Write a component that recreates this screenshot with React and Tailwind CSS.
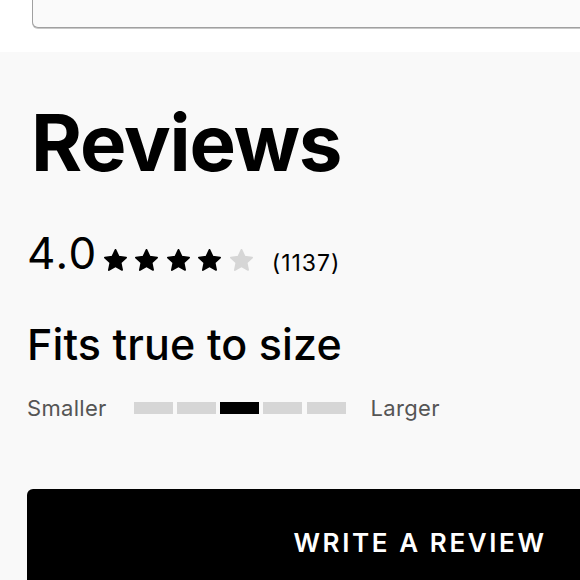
import React from "react";

const Star = ({ filled }) => (
  <svg width="23" height="23" viewBox="1.75 1.8 20.5 20.5" className="shrink-0">
    <path
      d="M12 2.6l2.85 6.05 6.6.78-4.88 4.52 1.3 6.52L12 17.2l-5.87 3.27 1.3-6.52L2.55 9.43l6.6-.78z"
      fill={filled ? "#000" : "#d6d6d6"}
      stroke={filled ? "#000" : "#d6d6d6"}
      strokeWidth="1.6"
      strokeLinejoin="round"
    />
  </svg>
);

export default function App() {
  const bars = [0, 0, 1, 0, 0];
  return (
    <div
      className="w-[580px] h-[580px] overflow-hidden bg-white"
      style={{ fontFamily: "Inter, 'Noto Sans', sans-serif" }}
    >
      <div className="h-[52px] bg-white pl-[32px]">
        <div className="w-[700px] h-[28px] bg-[#fafafa] border border-t-0 border-[#a0a0a0] rounded-b-[6px] shadow-[0_1px_0_#c8c8c8]" />
      </div>
      <div className="bg-[#f9f9f9] pl-[27px] pt-[52px] h-[528px]">
        <h1 className="pl-[4px] text-[78px] leading-none font-bold text-black tracking-[-1.2px]">
          Reviews
        </h1>
        <div className="flex items-center mt-[51px] h-[42px]">
          <span className="text-[44px] leading-none text-black tracking-[1.5px] mt-[-3px]">4.0</span>
          <div className="flex items-center gap-[8.5px] ml-[6px] mt-[12px]">
            {[1, 1, 1, 1, 0].map((f, i) => (
              <Star key={i} filled={f} />
            ))}
          </div>
          <span className="ml-[19px] text-[23px] leading-none text-black tracking-[1px] mt-[18px]">(1137)</span>
        </div>
        <h2 className="mt-[48px] text-[43px] leading-none font-medium text-black tracking-[0.1px]">
          Fits true to size
        </h2>
        <div className="flex items-center mt-[30px] h-[24px]">
          <span className="text-[22px] leading-none text-[#555] tracking-[0.3px]">Smaller</span>
          <div className="flex gap-[4.25px] ml-[27px] mr-[25px]">
            {bars.map((b, i) => (
              <div
                key={i}
                className={b ? "w-[39px] h-[12px] bg-black" : "w-[39px] h-[12px] bg-[#d6d6d6]"}
              />
            ))}
          </div>
          <span className="text-[22px] leading-none text-[#555] tracking-[0.3px]">Larger</span>
        </div>
        <div className="mt-[69px] w-[786px] h-[107px] bg-black rounded-t-[6px] flex items-center justify-center">
          <span className="text-white text-[26px] font-semibold tracking-[0.1em]">
            WRITE A REVIEW
          </span>
        </div>
      </div>
    </div>
  );
}
